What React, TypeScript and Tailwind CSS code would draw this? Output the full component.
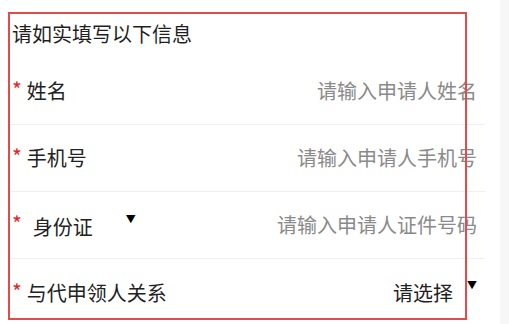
import React from "react";

const font = { fontFamily: '"Noto Sans CJK SC", "Noto Sans", sans-serif' };

interface RowProps {
  label: string;
  placeholder?: string;
}

function Star() {
  return <span className="text-[#e02626] text-[21px] leading-none mr-[5px] -mt-[3px]">*</span>;
}

function InputRow({ label, placeholder }: RowProps) {
  return (
    <div className="h-[67px] flex items-center border-b border-[#efefef] pl-[2px] pr-[8px]">
      <Star />
      <span className="text-[20px] text-[#222]">{label}</span>
      <span className="ml-auto text-[20px] text-[#8a8a8a]">{placeholder}</span>
    </div>
  );
}

export default function App() {
  return (
    <div className="relative w-[509px] h-[324px] overflow-hidden bg-white flex" style={font}>
      <div className="w-[500px] shrink-0">
        <div className="h-[58px] pt-[21px] pl-[12px] text-[20px] leading-[26px] text-[#1f1f1f]">
          请如实填写以下信息
        </div>
        <div className="ml-[10px] mr-[15px]">
          <InputRow label="姓名" placeholder="请输入申请人姓名" />
          <InputRow label="手机号" placeholder="请输入申请人手机号" />

          {/* 证件类型 */}
          <div className="h-[67px] flex items-center border-b border-[#efefef] pl-[2px] pr-[8px]">
            <Star />
            <span className="ml-[6px] text-[20px] text-[#222] mt-[4px]">身份证</span>
            <span className="ml-[33px] text-[10px] text-black -mt-[14px]">▼</span>
            <span className="ml-auto text-[20px] text-[#8a8a8a]">请输入申请人证件号码</span>
          </div>

          {/* 关系 */}
          <div className="h-[67px] flex items-center pl-[2px] pr-[8px]">
            <Star />
            <span className="text-[20px] text-[#222]">与代申领人关系</span>
            <span className="ml-auto text-[20px] text-[#222]">请选择</span>
            <span className="ml-[14px] text-[10px] text-black -mt-[16px]">▼</span>
          </div>
        </div>
      </div>
      <div className="flex-1 bg-[#f7f7f8]" />

      {/* annotation frame */}
      <div className="absolute left-[8px] top-[12px] w-[459px] h-[308px] border-2 border-[#e34b4b] pointer-events-none" />
    </div>
  );
}
